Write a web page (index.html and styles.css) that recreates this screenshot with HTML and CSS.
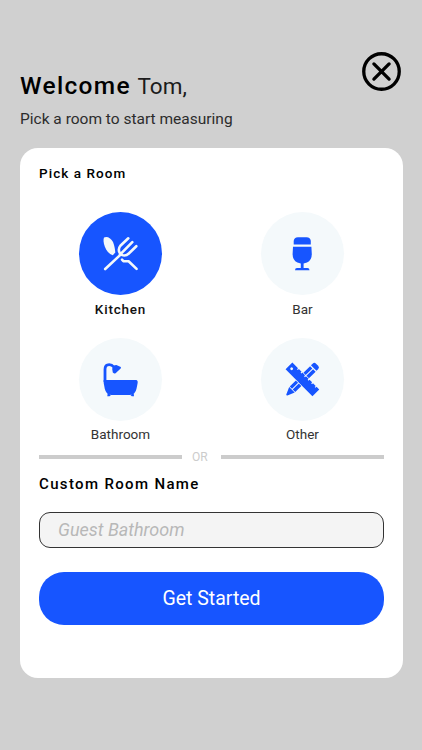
FILE: index.html
```html
<!DOCTYPE html>
<html lang="en">
<head>
    <meta charset="UTF-8">
    <meta name="viewport" content="width=device-width, initial-scale=1.0">
    <title>Pick a Room</title>
    <link rel="stylesheet" href="styles.css">
</head>
<body>
    <header class="header">
        <div>
            <h1 class="greeting"><b>Welcome</b> <span>Tom,</span></h1>
            <p class="subtitle">Pick a room to start measuring</p>
        </div>
        <button class="close" aria-label="Close">
            <svg viewBox="0 0 40 40" fill="none" stroke="#000" stroke-width="3.4" stroke-linecap="round">
                <circle cx="20" cy="20" r="18.2"/>
                <path d="M12.2 12.2l15.6 15.6M27.8 12.2l-15.6 15.6"/>
            </svg>
        </button>
    </header>

    <main class="card">
        <h2 class="card-title">Pick a Room</h2>

        <div class="rooms">
            <div class="room selected">
                <svg class="room-icon" viewBox="0 0 83 83">
                    <path fill="#f4f8fa" d="M25 25.5C28 23.8 32 26 34 30C35.3 33 36 37 36.3 40.5L33.8 43.2C30 42 27.3 38.5 25.8 34.5C24.6 31 24 27.5 25 25.5Z"/>
                    <g fill="none" stroke="#f4f8fa" stroke-width="2.6" stroke-linecap="round" stroke-linejoin="round">
                        <path d="M26.2 57L40.8 43.4"/>
                        <path d="M49.3 26.3L41.4 33.8Q38.8 37 40.5 40.5L42.7 42.8Q46.5 44.6 49.8 41.5L57.3 34.2"/>
                        <path d="M53.3 30.2L41 42.6"/>
                        <path d="M43 47.6L44.4 49.1L49.6 49.3L57.6 56.9"/>
                    </g>
                </svg>
                <span>Kitchen</span>
            </div>
            <div class="room">
                <svg class="room-icon" viewBox="0 0 83 83" fill="#1755ff">
                    <path d="M32.7 32.6V29Q33 25.2 37 25.2H45.5Q49.5 25.2 49.8 29V32.6Z"/>
                    <path d="M32 34.8H50.4L50.8 42Q50.8 48.5 46 50.4L42.6 51.4V56H46.5Q48.5 56 48.5 58.3H34Q34 56 36 56H39.8V51.4L36.4 50.4Q31.6 48.5 31.6 42Z"/>
                </svg>
                <span>Bar</span>
            </div>
            <div class="room">
                <svg class="room-icon" viewBox="0 0 83 83" fill="#1755ff">
                    <path d="M26 44V31.5Q26 26.7 30.2 26.7Q33 26.7 34.8 29" fill="none" stroke="#1755ff" stroke-width="2.8"/>
                    <path d="M33.2 31Q33.6 27.2 37.4 27L41.8 29Q42.3 30 41.4 30.7L36.6 35.2Q34.6 35.8 33.8 34.6Z"/>
                    <path d="M24.7 42H57.5Q59 42.5 58.7 44.8L57.5 50.8Q56.3 56.6 51 56.9H32.2Q27 56.6 25.8 50.8L24.7 45Z"/>
                    <path d="M28.7 55L32 57L30.5 58.3H28.3ZM54.7 55L51.4 57L52.8 58.3H55Z"/>
                </svg>
                <span>Bathroom</span>
            </div>
            <div class="room">
                <svg class="room-icon" viewBox="0 0 83 83" fill="#1755ff">
                    <!-- pencil, then the ruler laid over it -->
                    <g transform="translate(41.4 41.4) rotate(45)">
                        <path d="M-3.9 -16V-18.3Q-3.9 -20.8 -1.5 -20.8H1.5Q3.9 -20.8 3.9 -18.3V-16Z"/>
                        <path d="M-3.9 -14.8H-.7V-5H-3.9ZM.3 -14.8H3.9V-5H.3Z"/>
                        <path d="M-3.9 5H-.7V14H-3.9ZM.3 5H3.9V14H.3ZM-3.9 14.8H3.9L.8 22Q0 23 -.8 22Z"/>
                        <path fill="#f4f9fb" d="M-19.4 -5.4H19.4V5.4H-19.4Z"/>
                        <path d="M-19 -4.8H-11V-3.4H-9.8V-4.8H-6V-3.4H-4.8V-4.8H-1V-3.4H.2V-4.8H4V-3.4H5.2V-4.8H9V-3.4H10.2V-4.8H14V-3.4H15.2V-4.8H19V4.8H-19Z"/>
                        <circle cx="-15.2" cy="0" r="1.4" fill="#f4f9fb"/>
                    </g>
                </svg>
                <span>Other</span>
            </div>
        </div>

        <div class="divider"><span>OR</span></div>

        <label class="field-label" for="room-name">Custom Room Name</label>
        <input class="field" id="room-name" type="text" placeholder="Guest Bathroom">

        <button class="start">Get Started</button>
    </main>
</body>
</html>
```

FILE: styles.css
```css
* {
    box-sizing: border-box;
}
body {
    margin: 0;
    height: 750px;
    padding: 52px 19px 0 20px;
    background-color: #d0d0d0;
    font-family: Roboto, "Liberation Sans", sans-serif;
    color: #000;
    overflow: hidden;
}
h1, h2, p {
    margin: 0;
}
button {
    border: none;
    padding: 0;
    font-family: inherit;
    cursor: pointer;
}
.header {
    display: flex;
    justify-content: space-between;
    align-items: flex-start;
    height: 95.5px;
    padding-right: 2px;
}
.greeting {
    margin-top: 19px;
    font-size: 22.5px;
    line-height: 30px;
    font-weight: 400;
    color: #1c1c1c;
    white-space: nowrap;
}
.greeting b {
    margin-right: 1.5px;
    font-size: 24.5px;
    font-weight: 500;
    letter-spacing: 1.3px;
    color: #000;
}
.subtitle {
    margin-top: 8px;
    font-size: 15.5px;
    line-height: 20px;
    color: #2c2c2c;
}
.close {
    width: 39px;
    height: 39px;
    background: none;
}
.close svg {
    display: block;
}
.card {
    height: 530px;
    padding: 16px 19px 0;
    background-color: #fff;
    border-radius: 18px;
    display: flex;
    flex-direction: column;
}
.card-title {
    font-size: 13.5px;
    line-height: 18px;
    font-weight: 500;
    letter-spacing: 1.05px;
}
.rooms {
    display: grid;
    grid-template-columns: 1fr 1fr;
    gap: 20px 19px;
    margin-top: 30.5px;
}
.room {
    display: flex;
    flex-direction: column;
    align-items: center;
    font-size: 13.5px;
    line-height: 18px;
    color: #333;
}
.room-icon {
    width: 83px;
    height: 83px;
    margin-bottom: 4.5px;
    border-radius: 50%;
    background-color: #f4f9fb;
}
.room.selected {
    font-weight: 500;
    letter-spacing: 0.8px;
    color: #111;
}
.room.selected .room-icon {
    background-color: #1755ff;
}
.divider {
    display: flex;
    align-items: center;
    margin-top: 5.5px;
    font-size: 12px;
    line-height: 17px;
    color: #ccc;
}
.divider span {
    margin: 0 13px 0 10px;
}
.divider::before,
.divider::after {
    content: "";
    height: 4px;
    background-color: #ccc;
}
.divider::before {
    width: 143px;
}
.divider::after {
    flex: 1;
}
.field-label {
    margin-top: 8.5px;
    font-size: 15px;
    line-height: 20px;
    font-weight: 500;
    letter-spacing: 1.35px;
}
.field {
    height: 36px;
    margin-top: 18px;
    padding: 0 18px 1px;
    border: 1.5px solid #333;
    border-radius: 11px;
    background-color: #f4f4f4;
    font-family: inherit;
    font-size: 18px;
}
.field::placeholder {
    font-style: italic;
    color: #b8b8b8;
}
.start {
    height: 53px;
    margin-top: 23.5px;
    border-radius: 25px;
    background-color: #1755ff;
    color: #fff;
    font-size: 19.5px;
}
```
